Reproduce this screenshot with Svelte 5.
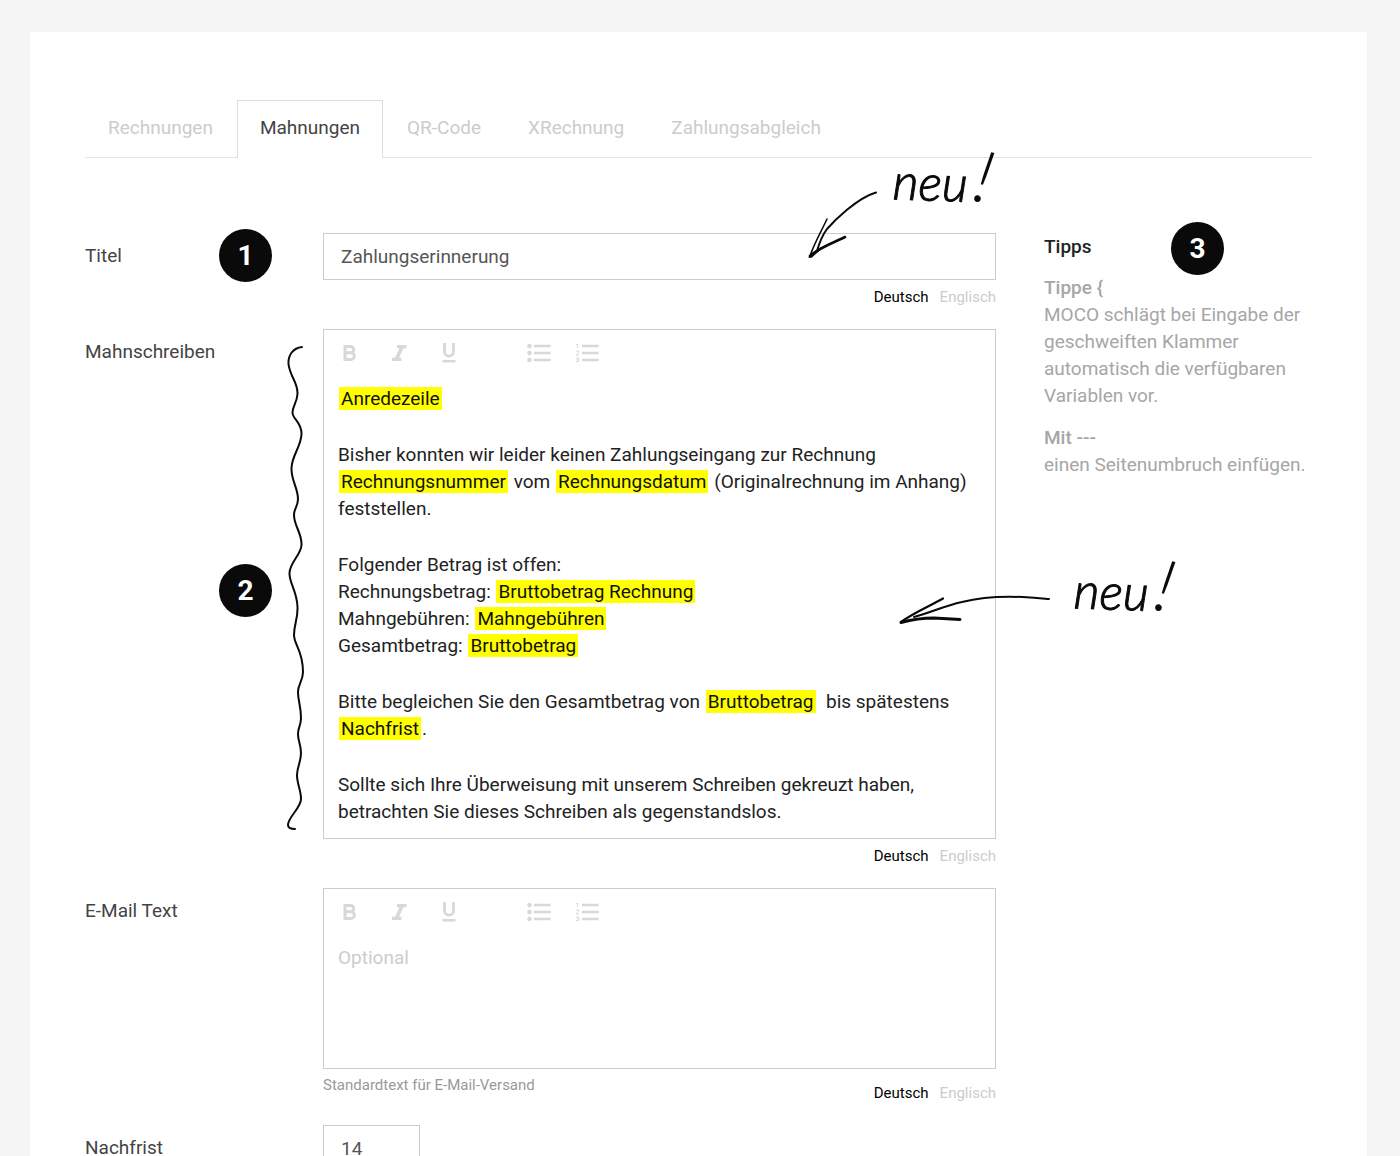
<script>
  const tabs = ['Rechnungen', 'Mahnungen', 'QR-Code', 'XRechnung', 'Zahlungsabgleich'];
  let active = $state('Mahnungen');
  let title = $state('Zahlungserinnerung');
  let days = $state('14');
</script>

{#snippet languages()}
  <div class="languages">
    <button type="button" class="lang current">Deutsch</button>
    <button type="button" class="lang">Englisch</button>
  </div>
{/snippet}

{#snippet toolbar()}
  <div class="toolbar" role="toolbar" aria-label="Formatierung">
    <button type="button" class="tool" aria-label="Fett">
      <svg width="14" height="18" viewBox="0 0 14 18"><path d="M3 2.500H8.500a3.100 3.100 0 0 1 0 6.300H3zM3 8.800H9a3.300 3.300 0 0 1 0 6.700H3z" fill="none" stroke="currentColor" stroke-width="3" /></svg>
    </button>
    <button type="button" class="tool" aria-label="Kursiv">
      <svg width="16" height="18" viewBox="0 0 16 18"><path d="M6 1H15.500V4.200H12.500L8 13.800H10.500V17H1V13.800H4L8.500 4.200H6z" fill="currentColor" /></svg>
    </button>
    <button type="button" class="tool" aria-label="Unterstrichen">
      <svg width="14" height="20" viewBox="0 0 14 20"><path d="M2.500 0V8.500a4.500 4.700 0 0 0 9 0V0" fill="none" stroke="currentColor" stroke-width="2.800" /><path d="M0.500 17H13.500V19.500H0.500z" fill="currentColor" /></svg>
    </button>
    <span class="space"></span>
    <button type="button" class="tool list" aria-label="Aufzählung">
      <svg width="24" height="20" viewBox="0 0 24 20"><g fill="currentColor"><circle cx="2.500" cy="3" r="2.300" /><circle cx="2.500" cy="10" r="2.300" /><circle cx="2.500" cy="17" r="2.300" /><path d="M7 1.800H23.500V4.200H7zM7 8.800H23.500V11.200H7zM7 15.800H23.500V18.200H7z" /></g></svg>
    </button>
    <button type="button" class="tool list" aria-label="Nummerierte Liste">
      <svg width="24" height="20" viewBox="0 0 24 20"><path d="M7 1.800H23.500V4.200H7zM7 8.800H23.500V11.200H7zM7 15.800H23.500V18.200H7z" fill="currentColor" /><path d="M1 1.500H2.600V5M1 8H3.800V9L1.300 11.500V12H4.200M1 15H3.800V18.500H1M1.800 16.800H3.800" fill="none" stroke="currentColor" stroke-width="1" /></svg>
    </button>
  </div>
{/snippet}

<main class="card">
  <nav class="tabs" aria-label="Einstellungen">
    {#each tabs as tab}
      <button type="button" class="tab" class:active={tab === active} onclick={() => (active = tab)}>{tab}</button>
    {/each}
  </nav>

  <div class="layout">
    <form class="form">
      <label class="label" for="title">Titel</label>
      <div class="field">
        <span class="badge first">1</span>
        <input id="title" class="input" bind:value={title} />
        {@render languages()}
        <svg class="arrow upper" width="80" height="76" viewBox="800 186 80 76" aria-hidden="true">
          <path d="M876 192.500C857 198 834 221 827 229C821 237 819 244 817 251" stroke-width="2" />
          <path d="M827 219C821 232 814 244 810 256" stroke-width="1.500" />
          <path d="M810 256C820 247 833 243 845 237" stroke-width="2.600" />
          <path d="M809 257L818 249L823 247L812 257z" class="solid" />
        </svg>
        <span class="note upper-note">neu<span class="mark-end">!</span></span>
      </div>

      <span class="label" id="letter-label">Mahnschreiben</span>
      <div class="field">
        <span class="badge second">2</span>
        <svg class="squiggle" width="24" height="492" viewBox="284 342 24 492" aria-hidden="true">
          <path d="M302 347C293 348 288 355 288.500 364C290 377 298 382 297.500 394C297 403 292 407 292.500 413C293 419 302 423 301.500 434C301 447 292 455 291.500 468C291 480 298 488 298 499C298 507 294 508 294 515C294 526 302 533 301.500 545C301 555 290 562 289.500 573C289 583 297 591 297.500 607C298 619 294 624 294 635C294 645 303 650 303 672C303 681 298 684 298 692C298 701 301 706 301 718C301 726 298 727 298 734C298 741 301 745 301 753C301 762 297 767 297 775C297 784 301 790 301 799C301 808 288 817 288 825C288 828 291 829 295 829" />
        </svg>
        <div class="editor">
          {@render toolbar()}
          <div class="content" contenteditable="true" role="textbox" tabindex="0" aria-multiline="true" aria-labelledby="letter-label">
            <p><mark>Anredezeile</mark></p>
            <p>Bisher konnten wir leider keinen Zahlungseingang zur Rechnung <mark>Rechnungsnummer</mark> vom <mark>Rechnungsdatum</mark> (Originalrechnung im Anhang) feststellen.</p>
            <p>Folgender Betrag ist offen:<br />Rechnungsbetrag: <mark>Bruttobetrag Rechnung</mark><br />Mahngebühren: <mark>Mahngebühren</mark><br />Gesamtbetrag: <mark>Bruttobetrag</mark></p>
            <p>Bitte begleichen Sie den Gesamtbetrag von <mark>Bruttobetrag</mark>&nbsp; bis spätestens <mark>Nachfrist</mark>.</p>
            <p>Sollte sich Ihre Überweisung mit unserem Schreiben gekreuzt haben, betrachten Sie dieses Schreiben als gegenstandslos.</p>
          </div>
        </div>
        {@render languages()}
        <svg class="arrow lower" width="156" height="36" viewBox="896 592 156 36" aria-hidden="true">
          <path d="M1049 599C1044 599 1038 598 1030 597.500C1008 596 986 596 962 602C944 606 932 612 914 617" stroke-width="2" />
          <path d="M943 598.500C930 606 913 613 901 622" stroke-width="2.200" />
          <path d="M901 622.500C914 619 922 618 934 618L960 619.500" stroke-width="3" />
        </svg>
        <span class="note lower-note">neu<span class="mark-end">!</span></span>
      </div>

      <span class="label" id="mail-label">E-Mail Text</span>
      <div class="field">
        <div class="editor short">
          {@render toolbar()}
          <div class="content placeholder" contenteditable="true" role="textbox" tabindex="0" aria-multiline="true" aria-labelledby="mail-label"><p>Optional</p></div>
        </div>
        <div class="below">
          <small class="hint">Standardtext für E-Mail-Versand</small>
          {@render languages()}
        </div>
      </div>

      <label class="label" for="days">Nachfrist</label>
      <div class="field">
        <input id="days" class="input days" bind:value={days} />
      </div>
    </form>

    <aside class="tips">
      <span class="badge third">3</span>
      <h2>Tipps</h2>
      <p><strong>Tippe &#123;</strong><br />MOCO schlägt bei Eingabe der geschweiften Klammer automatisch die verfügbaren Variablen vor.</p>
      <p><strong>Mit ---</strong><br />einen Seitenumbruch einfügen.</p>
    </aside>
  </div>
</main>

<style>
  :global(body) {
    margin: 0;
    background: #f5f5f5;
  }
  .card {
    box-sizing: border-box;
    min-height: calc(100vh - 32px);
    margin: 32px 33px 0 30px;
    padding: 68px 55px 0;
    background: #fff;
    color: #444;
    font: 19px/27px Roboto, sans-serif;
  }
  button {
    padding: 0;
    border: 0;
    background: none;
    font: inherit;
    color: inherit;
    cursor: pointer;
  }
  .tabs {
    display: flex;
    gap: 1px;
    border-bottom: 1px solid #e4e4e4;
  }
  .tab {
    height: 58px;
    margin-bottom: -1px;
    padding: 0 22px 4px;
    border: 1px solid transparent;
    border-bottom: 0;
    color: #ccc;
  }
  .tab.active {
    border-color: #ddd;
    background: #fff;
    color: #444;
  }
  .layout {
    display: grid;
    grid-template-columns: minmax(0, 1fr) 268px;
    column-gap: 48px;
    padding-top: 75px;
  }
  .form {
    display: grid;
    grid-template-columns: 190px minmax(0, 1fr);
    column-gap: 48px;
    align-content: start;
  }
  .label {
    padding-top: 9px;
  }
  .field {
    position: relative;
  }
  .input {
    box-sizing: border-box;
    display: block;
    width: 100%;
    height: 47px;
    padding: 0 17px;
    border: 1px solid #ccc;
    border-radius: 0;
    background: #fff;
    font: inherit;
    color: #555;
  }
  .input.days {
    width: 97px;
  }
  .languages {
    display: flex;
    justify-content: flex-end;
    gap: 11px;
    height: 41px;
    padding-top: 8px;
    font-size: 15px;
    line-height: 18px;
  }
  .lang {
    height: 18px;
    color: #ccc;
  }
  .lang.current {
    color: #000;
  }
  .editor {
    box-sizing: border-box;
    min-height: 510px;
    border: 1px solid #ccc;
  }
  .editor.short {
    min-height: 181px;
  }
  .toolbar {
    display: flex;
    height: 45px;
  }
  .tool {
    display: grid;
    place-items: center;
    width: 50px;
    color: #d8d8d8;
  }
  .tool.list {
    width: 48px;
  }
  .space {
    width: 41px;
  }
  .content {
    padding: 10px 14px 0;
    outline: 0;
    color: #222;
  }
  .content.placeholder {
    color: #ccc;
  }
  .content p {
    margin: 0 0 29px;
  }
  .content p:last-child {
    margin: 0;
  }
  mark {
    margin: 0 1px;
    padding: 0 2px;
    background: #ff0;
    color: #111;
  }
  .below {
    display: flex;
    justify-content: space-between;
    padding-top: 7px;
  }
  .below .hint {
    font-size: 15px;
    line-height: 18px;
    color: #999;
  }
  .tips {
    position: relative;
    color: #a6a6a6;
  }
  .tips h2 {
    margin: 0 0 14px;
    font-size: 19px;
    font-weight: 500;
    color: #222;
  }
  .tips p {
    margin: 0 0 15px;
  }
  .tips strong {
    font-weight: 500;
  }
  .badge {
    position: absolute;
    display: grid;
    place-items: center;
    width: 53px;
    height: 53px;
    border-radius: 50%;
    background: #0a0a0a;
    color: #fff;
    font-size: 28px;
    font-weight: 700;
  }
  .first {
    top: -4px;
    left: -104px;
  }
  .second {
    top: 235px;
    left: -104px;
  }
  .third {
    top: -11px;
    left: 127px;
  }
  .arrow,
  .squiggle {
    position: absolute;
    fill: none;
    stroke: #0a0a0a;
    stroke-linecap: round;
    stroke-linejoin: round;
    pointer-events: none;
  }
  .squiggle {
    top: 13px;
    left: -39px;
    stroke-width: 2;
  }
  .solid {
    fill: #0a0a0a;
  }
  .upper {
    top: -47px;
    right: 116px;
  }
  .lower {
    top: 263px;
    right: -56px;
  }
  .note {
    position: absolute;
    color: #0a0a0a;
    font: italic 300 50px/56px Lato, cursive;
    -webkit-text-stroke: 1px #0a0a0a;
    white-space: nowrap;
    transform: rotate(2deg);
  }
  .mark-end {
    display: inline-block;
    margin-left: 8px;
    font-size: 72px;
    -webkit-text-stroke: 0;
    transform: rotate(10deg);
  }
  .upper-note {
    top: -88px;
    right: 3px;
  }
  .lower-note {
    top: 225px;
    right: -178px;
  }
</style>
